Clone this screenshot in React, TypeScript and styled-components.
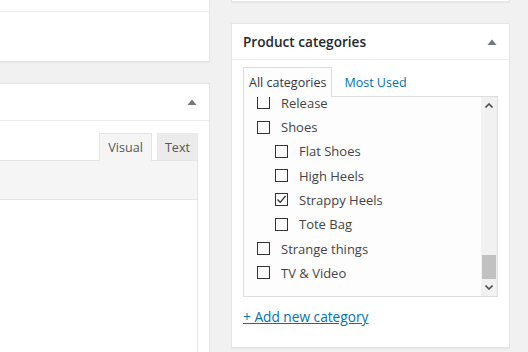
import React from "react";
import styled, { createGlobalStyle } from "styled-components";

const GlobalStyle = createGlobalStyle`
  html, body { margin: 0; padding: 0; }
  body {
    background: #f1f1f1;
    font-family: "Open Sans", "Noto Sans", sans-serif;
    font-size: 13px;
    color: #444;
    overflow: hidden;
  }
`;

const Page = styled.div`
  display: flex;
  align-items: flex-start;
  gap: 21px;
  width: 528px;
  height: 352px;
  overflow: hidden;
`;

const LeftCol = styled.div`
  width: 210px;
  display: flex;
  flex-direction: column;
  gap: 21px;
`;

const RightCol = styled.div`
  width: 279px;
  display: flex;
  flex-direction: column;
  gap: 21px;
`;

const Box = styled.div<{ $left?: boolean }>`
  background: #fff;
  border: 1px solid #e5e5e5;
  border-left: ${(p) => (p.$left ? "none" : "1px solid #e5e5e5")};
  box-shadow: 0 1px 1px rgba(0, 0, 0, 0.04);
  box-sizing: border-box;
`;

const TopBox = styled(Box)`
  border-top: none;
  height: 62px;
  display: flex;
  flex-direction: column;
`;

const TopStrip = styled.div`
  height: 11px;
  border-bottom: 1px solid #eee;
`;

const StubBox = styled(Box)`
  border-top: none;
  height: 2px;
`;

const EditorBox = styled(Box)`
  height: 300px;
`;

const Header = styled.div<{ $h: number }>`
  height: ${(p) => p.$h}px;
  border-bottom: 1px solid #eee;
  display: flex;
  align-items: center;
  justify-content: space-between;
  padding: 0 12px 0 11px;
`;

const Title = styled.h2`
  margin: 0;
  font-size: 13.6px;
  font-weight: 600;
  color: #23282d;
`;

const Toggle = styled.svg`
  width: 10px;
  height: 6px;
  fill: #72777c;
  display: block;
`;

const EditorWrap = styled.div`
  padding: 12px 11px 0 0;
`;

const EditorTabs = styled.div`
  display: flex;
  justify-content: flex-end;
  align-items: flex-end;
  gap: 5px;
  height: 27px;
`;

const EditorTab = styled.div<{ $active?: boolean }>`
  box-sizing: border-box;
  height: ${(p) => (p.$active ? "28px" : "27px")};
  margin-bottom: ${(p) => (p.$active ? "-1px" : "0")};
  padding: 0 ${(p) => (p.$active ? "8px" : "7px")};
  display: flex;
  align-items: center;
  font-size: 12.6px;
  color: #555;
  background: ${(p) => (p.$active ? "#f5f5f5" : "#ebebeb")};
  border: 1px solid ${(p) => (p.$active ? "#e5e5e5" : "#ebebeb")};
  border-bottom: none;
  position: relative;
  z-index: 1;
`;

const Toolbar = styled.div`
  height: 38px;
  background: #f5f5f5;
  border-top: 1px solid #e5e5e5;
  border-right: 1px solid #e5e5e5;
  border-bottom: 1px solid #e5e5e5;
`;

const EditorArea = styled.div`
  height: 200px;
  background: #fff;
  border-right: 1px solid #e5e5e5;
`;

const Inside = styled.div`
  padding: 7px 11px 0 11px;
`;

const CatTabs = styled.div`
  display: flex;
  align-items: flex-end;
  gap: 6px;
  height: 29px;
`;

const CatTab = styled.div<{ $active?: boolean }>`
  box-sizing: border-box;
  height: ${(p) => (p.$active ? "30px" : "29px")};
  padding: 0 5px;
  display: flex;
  align-items: center;
  margin-bottom: ${(p) => (p.$active ? "-1px" : "0")};
  position: relative;
  z-index: 1;
  font-size: 12.5px;
  color: ${(p) => (p.$active ? "#32373c" : "#0073aa")};
  background: ${(p) => (p.$active ? "#fdfdfd" : "transparent")};
  border: 1px solid ${(p) => (p.$active ? "#ddd" : "transparent")};
  border-bottom: none;
`;

const ListBox = styled.div`
  box-sizing: border-box;
  height: 201px;
  border: 1px solid #ddd;
  background: #fdfdfd;
  display: flex;
`;

const ListViewport = styled.div`
  flex: 1;
  overflow: hidden;
  display: flex;
  flex-direction: column;
  justify-content: flex-end;
`;

const List = styled.ul`
  list-style: none;
  margin: 0;
  padding: 0 0 11px 13px;
`;

const Row = styled.li<{ $depth: number }>`
  height: 24.3px;
  display: flex;
  align-items: center;
  gap: 11px;
  padding-left: ${(p) => p.$depth * 18}px;
  color: #444;
  font-size: 13px;
  white-space: nowrap;
`;

const Check = styled.span`
  box-sizing: border-box;
  width: 13px;
  height: 13px;
  border: 1px solid #333;
  background: #fff;
  display: flex;
  align-items: center;
  justify-content: center;
  flex: none;
`;

const ScrollBar = styled.div`
  width: 16px;
  background: #f1f1f1;
  display: flex;
  flex-direction: column;
`;

const ScrollBtn = styled.div`
  height: 17px;
  display: flex;
  align-items: center;
  justify-content: center;
`;

const Track = styled.div`
  flex: 1;
  display: flex;
  flex-direction: column;
  justify-content: flex-end;
  padding: 0 1px;
`;

const Thumb = styled.div`
  height: 24px;
  background: #c1c1c1;
`;

const AddLink = styled.a`
  display: block;
  margin: 12px 0 0;
  padding-bottom: 22px;
  font-size: 13.7px;
  color: #0073aa;
  text-decoration: underline;
  line-height: 16px;
`;

const Chevron = ({ up }: { up?: boolean }) => (
  <svg width="8" height="5" viewBox="0 0 8 5">
    <path
      d={up ? "M0.5 4.5 L4 1 L7.5 4.5" : "M0.5 0.5 L4 4 L7.5 0.5"}
      fill="none"
      stroke="#505050"
      strokeWidth="1.6"
    />
  </svg>
);

const ToggleArrow = () => (
  <Toggle viewBox="0 0 10 6">
    <path d="M0.5 6 L5 0.5 L9.5 6 Z" />
  </Toggle>
);

type Cat = { name: string; depth: number; checked?: boolean };

const cats: Cat[] = [
  { name: "Release", depth: 0 },
  { name: "Shoes", depth: 0 },
  { name: "Flat Shoes", depth: 1 },
  { name: "High Heels", depth: 1 },
  { name: "Strappy Heels", depth: 1, checked: true },
  { name: "Tote Bag", depth: 1 },
  { name: "Strange things", depth: 0 },
  { name: "TV & Video", depth: 0 },
];

export default function App() {
  return (
    <>
      <GlobalStyle />
      <Page>
        <LeftCol>
          <TopBox $left>
            <TopStrip />
          </TopBox>
          <EditorBox $left>
            <Header $h={36}>
              <span />
              <ToggleArrow />
            </Header>
            <EditorWrap>
              <EditorTabs>
                <EditorTab $active>Visual</EditorTab>
                <EditorTab>Text</EditorTab>
              </EditorTabs>
              <Toolbar />
              <EditorArea />
            </EditorWrap>
          </EditorBox>
        </LeftCol>
        <RightCol>
          <StubBox />
          <Box>
            <Header $h={35}>
              <Title>Product categories</Title>
              <ToggleArrow />
            </Header>
            <Inside>
              <CatTabs>
                <CatTab $active>All categories</CatTab>
                <CatTab>Most Used</CatTab>
              </CatTabs>
              <ListBox>
                <ListViewport>
                  <List>
                    {cats.map((c) => (
                      <Row key={c.name} $depth={c.depth}>
                        <Check>
                          {c.checked && (
                            <svg width="11" height="11" viewBox="0 0 11 11">
                              <path
                                d="M1.5 5.5 L4.2 8.3 L9.5 2"
                                fill="none"
                                stroke="#333"
                                strokeWidth="1.3"
                              />
                            </svg>
                          )}
                        </Check>
                        {c.name}
                      </Row>
                    ))}
                  </List>
                </ListViewport>
                <ScrollBar>
                  <ScrollBtn>
                    <Chevron up />
                  </ScrollBtn>
                  <Track>
                    <Thumb />
                  </Track>
                  <ScrollBtn>
                    <Chevron />
                  </ScrollBtn>
                </ScrollBar>
              </ListBox>
              <AddLink href="#">+ Add new category</AddLink>
            </Inside>
          </Box>
        </RightCol>
      </Page>
    </>
  );
}
